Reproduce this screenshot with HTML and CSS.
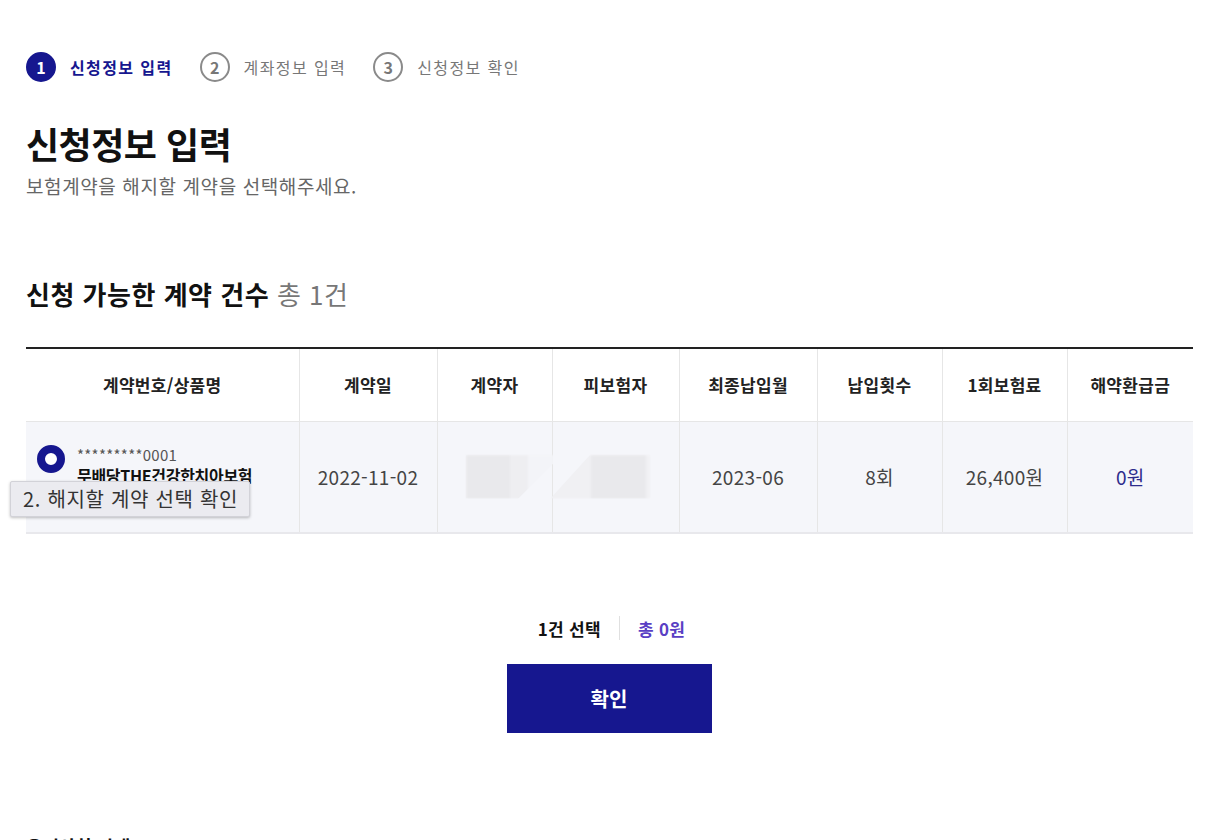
FILE: index.html
```html
<!DOCTYPE html>
<html lang="ko">
<head>
<meta charset="utf-8">
<title>신청정보 입력</title>
<link rel="stylesheet" href="styles.css">
</head>
<body>
<div class="page">
  <ol class="steps">
    <li class="step active"><span class="num">1</span><span class="label">신청정보 입력</span></li>
    <li class="step"><span class="num">2</span><span class="label">계좌정보 입력</span></li>
    <li class="step"><span class="num">3</span><span class="label">신청정보 확인</span></li>
  </ol>

  <h1 class="title">신청정보 입력</h1>
  <p class="desc">보험계약을 해지할 계약을 선택해주세요.</p>

  <h2 class="section">신청 가능한 계약 건수 <span class="count">총 1건</span></h2>

  <div class="table-wrap">
    <table class="contracts">
      <colgroup>
        <col class="c1"><col class="c2"><col class="c3"><col class="c4"><col class="c5"><col class="c6"><col class="c7"><col class="c8">
      </colgroup>
      <thead>
        <tr>
          <th>계약번호/상품명</th>
          <th>계약일</th>
          <th>계약자</th>
          <th>피보험자</th>
          <th>최종납입월</th>
          <th>납입횟수</th>
          <th>1회보험료</th>
          <th>해약환급금</th>
        </tr>
      </thead>
      <tbody>
        <tr>
          <td class="product">
            <div class="prod-inner">
              <span class="radio"></span>
              <div class="prod-text">
                <div class="prod-no">*********0001</div>
                <div class="prod-name">무배당THE건강한치아보험</div>
              </div>
            </div>
          </td>
          <td>2022-11-02</td>
          <td class="masked"><span class="blur b1"></span></td>
          <td class="masked"><span class="blur b2"></span></td>
          <td>2023-06</td>
          <td>8회</td>
          <td>26,400원</td>
          <td class="refund">0원</td>
        </tr>
      </tbody>
    </table>
    <div class="tooltip">2. 해지할 계약 선택 확인</div>
  </div>

  <div class="summary">
    <span class="sel">1건 선택</span>
    <span class="sep"></span>
    <span class="total">총 0원</span>
  </div>
  <div class="actions">
    <button class="btn-primary" type="button">확인</button>
  </div>

  <h3 class="next">유의사항 안내</h3>
</div>
</body>
</html>
```

FILE: styles.css
```css
* { box-sizing: border-box; }
html, body { margin: 0; padding: 0; background: #fff; }
body {
  font-family: "Noto Sans CJK KR", "Noto Sans", sans-serif;
  color: #111;
  overflow: hidden;
  height: 840px;
}
.page {
  width: 1167px;
  margin-left: 26px;
}
.steps {
  list-style: none;
  margin: 0;
  padding: 52px 0 0;
  display: flex;
  gap: 27px;
  height: 83px;
}
.step {
  display: flex;
  align-items: center;
  gap: 14px;
  height: 30px;
}
.num {
  width: 30px;
  height: 30px;
  border-radius: 50%;
  border: 2px solid #8a8a8a;
  color: #777;
  font-size: 16px;
  font-weight: 700;
  display: flex;
  align-items: center;
  justify-content: center;
  line-height: 1;
}
.label {
  font-size: 16px;
  color: #777;
  letter-spacing: 1.4px;
}
.step.active .num {
  background: #16178f;
  border-color: #16178f;
  color: #fff;
}
.step.active .label {
  color: #16178f;
  font-weight: 700;
}
.title {
  margin: 36px 0 0;
  font-size: 36px;
  font-weight: 700;
  line-height: 48px;
  letter-spacing: -0.5px;
  color: #111;
}
.desc {
  margin: 6px 0 0;
  font-size: 19px;
  line-height: 26px;
  color: #666;
  letter-spacing: 0.6px;
}
.section {
  margin: 78px 0 0;
  font-size: 26px;
  line-height: 34px;
  font-weight: 700;
  letter-spacing: 0.5px;
}
.section .count {
  font-weight: 400;
  color: #777;
}
.table-wrap {
  position: relative;
  margin-top: 36px;
}
.contracts {
  width: 100%;
  border-collapse: collapse;
  table-layout: fixed;
  border-top: 2px solid #222;
}
.c1 { width: 273px; }
.c2 { width: 138px; }
.c3 { width: 115px; }
.c4 { width: 127px; }
.c5 { width: 138px; }
.c6 { width: 125px; }
.c7 { width: 125px; }
.c8 { width: 126px; }
.contracts th {
  height: 73px;
  font-size: 17px;
  font-weight: 700;
  color: #222;
  border-left: 1px solid #e6e6e6;
  border-bottom: 1px solid #e6e6e6;
  letter-spacing: 0.3px;
}
.contracts th:first-child,
.contracts td:first-child { border-left: none; }
.contracts td {
  height: 112px;
  background: #f5f6fa;
  text-align: center;
  font-size: 19px;
  color: #444;
  border-left: 1px solid #e6e6e6;
  border-bottom: 2px solid #e8e8ec;
  letter-spacing: 0.3px;
}
.contracts td.refund { color: #2d2c8c; }
.product { text-align: left !important; padding: 0 0 0 11px; }
.prod-inner {
  display: flex;
  align-items: flex-start;
  gap: 12px;
  margin-top: -24px;
}
.radio {
  width: 28px;
  height: 28px;
  border-radius: 50%;
  border: 8px solid #16178f;
  background: #fff;
  flex: none;
  margin-top: 0;
}
.prod-text { line-height: 20px; }
.prod-no { font-size: 15px; color: #555; letter-spacing: 0.3px; }
.prod-name { font-size: 16px; font-weight: 700; color: #111; white-space: nowrap; overflow: hidden; width: 185px; letter-spacing: -0.3px; }
.masked { position: relative; }
.blur {
  position: absolute;
  top: 33px;
  height: 44px;
  background: #ebebee;
  filter: blur(1px);
}
.b1 { left: 28px; width: 88px; background: linear-gradient(90deg, #e9e9ec 0 50%, #eeeef1 50% 70%, #f3f4f8 70%); clip-path: polygon(0 0, 100% 0, 100% 20%, 60% 100%, 0 100%); }
.b2 { left: -2px; width: 100px; background: linear-gradient(90deg, #f0f0f3 0 40%, #e9e9ec 40% 95%, #f1f1f4 95%); clip-path: polygon(0 100%, 40% 0, 100% 0, 100% 100%); }
.tooltip {
  position: absolute;
  left: -16px;
  top: 134px;
  width: 240px;
  height: 36px;
  background: #ebebf0;
  border: 1px solid #d2d2d8;
  border-radius: 2px;
  box-shadow: 0 1px 3px rgba(0,0,0,0.25);
  font-family: "Noto Sans CJK KR", sans-serif;
  font-size: 20px;
  line-height: 33px;
  padding-left: 12px;
  color: #333;
  letter-spacing: 0.7px;
  white-space: nowrap;
}
.summary {
  margin-top: 81px;
  display: flex;
  justify-content: center;
  align-items: center;
  gap: 18px;
  height: 26px;
  font-size: 17px;
  font-weight: 700;
  letter-spacing: 0.3px;
  padding-left: 4px;
}
.sel { color: #111; }
.sep { width: 1px; height: 24px; background: #e0e0e0; }
.total { color: #5a3fc4; }
.actions {
  display: flex;
  justify-content: center;
  margin-top: 23px;
}
.btn-primary {
  width: 205px;
  height: 69px;
  background: #16178f;
  border: none;
  color: #fff;
  font-family: inherit;
  font-size: 20px;
  font-weight: 700;
  margin-left: -1px;
}
.next {
  margin: 100px 0 0;
  font-size: 18px;
  font-weight: 700;
  color: #111;
}
```
